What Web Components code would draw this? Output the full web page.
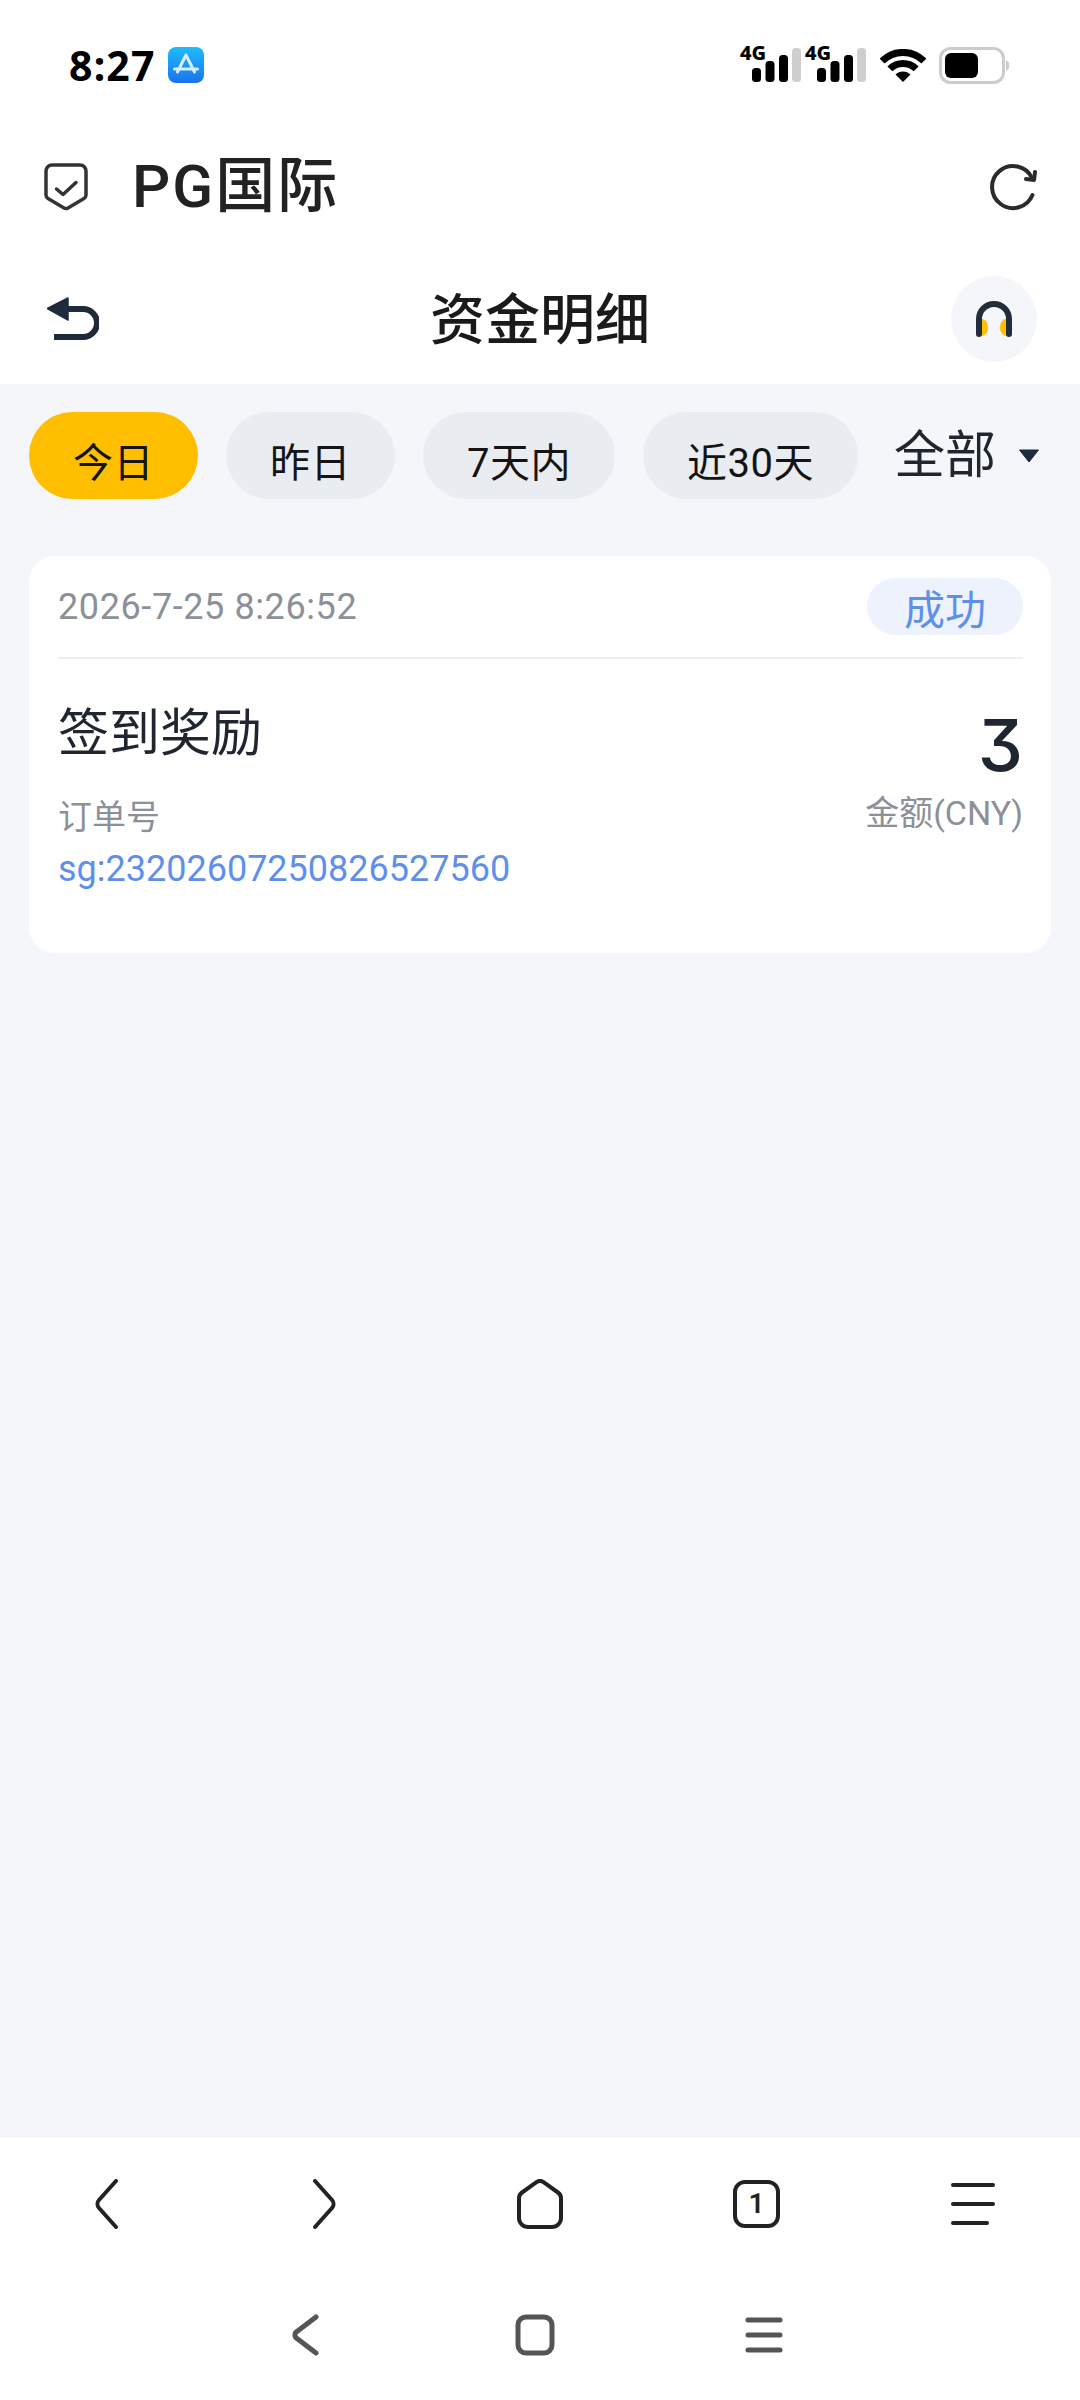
<!DOCTYPE html>
<html lang="zh-CN">
<head>
<meta charset="utf-8">
<title>资金明细</title>
<style>
	html, body {
		margin: 0;
		height: 100%;
	}

	body {
		width: 1080px;
		height: 2400px;
		display: flex;
		flex-direction: column;
		overflow: hidden;
		background: #f4f6fa;
		font-family: Roboto, 'Noto Sans CJK SC', sans-serif;
	}

	main {
		flex: 1;
		display: block;
	}
</style>
</head>
<body>
	<phone-status time="8:27"></phone-status>
	<app-bar>PG国际</app-bar>
	<title-bar>资金明细</title-bar>
	<main>
		<filter-row>
			<filter-tab active>今日</filter-tab>
			<filter-tab>昨日</filter-tab>
			<filter-tab>7天内</filter-tab>
			<filter-tab>近30天</filter-tab>
			<type-select slot="select">全部</type-select>
		</filter-row>
		<record-card
			date="2026-7-25 8:26:52"
			status="成功"
			name="签到奖励"
			order="sg:23202607250826527560"
			amount="3"
			unit="金额(CNY)"></record-card>
	</main>
	<browser-bar tabs="1"></browser-bar>
	<system-nav></system-nav>

<script>
	class PhoneStatus extends HTMLElement {
		constructor() {
			super();
			const signal = `
				<span class='signal'>
					<b>4G</b>
					<svg width='50' height='34' viewBox='0 0 50 34'>
						<rect x='1' y='20' width='9' height='14' rx='3.5'/>
						<rect x='14.500' y='13' width='9' height='21' rx='3.5'/>
						<rect x='28' y='7' width='9' height='27' rx='3.5'/>
						<rect x='41' y='0' width='9' height='34' rx='3.5' fill='#cfcfcf'/>
					</svg>
				</span>`;
			this.attachShadow({ mode: 'open' });
			this.shadowRoot.innerHTML = `
				<style>
					:host {
						display: flex;
						align-items: center;
						box-sizing: border-box;
						height: 120px;
						padding: 10px 69px 0 69px;
						background: #fff;
						color: #000;
					}

					.time {
						font: 700 41px/1 'Noto Sans', sans-serif;
						letter-spacing: 1.200px;
					}

					.store {
						margin-left: 12px;
					}

					.right {
						margin-left: auto;
						display: flex;
						align-items: center;
					}

					.signal {
						position: relative;
						display: block;
						width: 60px;
						height: 34px;
						margin-right: 5px;
					}

					.signal svg {
						position: absolute;
						right: 0;
						top: 0;
					}

					.signal b {
						position: absolute;
						left: -1px;
						top: -5px;
						font: 800 20px/20px 'Noto Sans', sans-serif;
					}

					.wifi {
						margin-left: 9px;
					}

					.battery {
						margin-left: 13px;
					}
				</style>
				<span class='time'>${this.getAttribute('time')}</span>
				<svg class='store' width='36' height='36' viewBox='0 0 36 36'>
					<defs>
						<linearGradient id='store' x1='0' y1='0' x2='0' y2='1'>
							<stop offset='0' stop-color='#1fbcfa'/>
							<stop offset='1' stop-color='#1a72f0'/>
						</linearGradient>
					</defs>
					<rect width='36' height='36' rx='8' fill='url(#store)'/>
					<path d='M18 8 L9.500 25 M18 8 L26.500 25 M6.500 22 H29.500' stroke='#d8eefe' stroke-width='3' stroke-linecap='round' fill='none'/>
				</svg>
				<span class='right'>
					${signal}
					${signal}
					<svg class='wifi' width='46' height='33' viewBox='0 0 46 33'>
						<g fill='none' stroke='#000' stroke-width='7'>
							<path d='M2.100 12.100 A29.500 29.500 0 0 1 43.900 12.100'/>
							<path d='M9.900 19.900 A18.500 18.500 0 0 1 36.100 19.900'/>
						</g>
						<path d='M23 33 L15.500 25.500 A10.600 10.600 0 0 1 30.500 25.500 Z'/>
					</svg>
					<svg class='battery' width='72' height='37' viewBox='0 0 72 37'>
						<rect x='1.500' y='1.500' width='63' height='34' rx='10' fill='none' stroke='#cccccc' stroke-width='3'/>
						<rect x='6' y='6' width='33' height='25' rx='6'/>
						<path d='M67 13 L70 15.500 V21.500 L67 24 Z' fill='#cccccc'/>
					</svg>
				</span>
			`;
		}
	}

	class AppBar extends HTMLElement {
		constructor() {
			super();
			this.attachShadow({ mode: 'open' });
			this.shadowRoot.innerHTML = `
				<style>
					:host {
						display: flex;
						align-items: center;
						box-sizing: border-box;
						height: 134px;
						padding: 0 44px;
						background: #fff;
						color: #222;
					}

					.name {
						margin-left: 44px;
						font-size: 60px;
						font-weight: 500;
						letter-spacing: 2px;
						line-height: 1;
					}

					.reload {
						margin-left: auto;
						margin-right: -1px;
					}
				</style>
				<svg width='44' height='48' viewBox='0 0 44 48' fill='none' stroke='#333' stroke-width='3.500' stroke-linecap='round' stroke-linejoin='round'>
					<path d='M8 2 H36 A6 6 0 0 1 42 8 V32 A4 4 0 0 1 40 35.500 L24 45 A4 4 0 0 1 20 45 L4 35.500 A4 4 0 0 1 2 32 V8 A6 6 0 0 1 8 2 Z'/>
					<path d='M12.500 26 L19 31.500 L32 19.500'/>
				</svg>
				<span class='name'><slot></slot></span>
				<svg class='reload' width='48' height='48' viewBox='0 0 48 48' fill='none' stroke='#2b2b2b' stroke-width='4' stroke-linecap='round' stroke-linejoin='round'>
					<path d='M43.500 32 A21 21 0 1 1 43 15'/>
					<path d='M46 9 L45 17 L37 16'/>
				</svg>
			`;
		}
	}

	class TitleBar extends HTMLElement {
		constructor() {
			super();
			this.attachShadow({ mode: 'open' });
			this.shadowRoot.innerHTML = `
				<style>
					:host {
						display: grid;
						grid-template-columns: 1fr auto 1fr;
						align-items: center;
						box-sizing: border-box;
						height: 130px;
						padding: 0 43px;
						background: #fff;
						color: #1a1a1a;
					}

					svg.back {
						margin-left: 4px;
					}

					.title {
						padding-top: 3px;
						font-size: 55px;
						font-weight: 500;
						line-height: 1;
					}

					.service {
						justify-self: end;
						width: 86px;
						height: 86px;
						border-radius: 50%;
						background: #f4f6fa;
						display: flex;
						align-items: center;
						justify-content: center;
					}
				</style>
				<svg class='back' width='52' height='44' viewBox='0 0 52 44'>
					<path d='M0 11.500 L21 1 V23 Z' fill='#1f2a3a' stroke='#1f2a3a' stroke-width='1.500' stroke-linejoin='round'/>
					<path d='M17 12 H36 A14 14 0 0 1 36 40 H7' fill='none' stroke='#1f2a3a' stroke-width='6'/>
				</svg>
				<span class='title'><slot></slot></span>
				<span class='service'>
					<svg width='36' height='36' viewBox='0 0 36 36'>
						<path d='M3 18 H6 A6 8.500 0 0 1 6 35 H3 Z' fill='#ffbe00'/>
						<path d='M33 18 H30 A6 8.500 0 0 0 30 35 H33 Z' fill='#ffbe00'/>
						<path d='M3 33 V18 A15 15 0 0 1 33 18 V33' fill='none' stroke='#222c3a' stroke-width='6' stroke-linecap='round'/>
					</svg>
				</span>
			`;
		}
	}

	class FilterRow extends HTMLElement {
		constructor() {
			super();
			this.attachShadow({ mode: 'open' });
			this.shadowRoot.innerHTML = `
				<style>
					:host {
						display: flex;
						align-items: center;
						gap: 28px;
						padding: 28px 0 0 29px;
					}
				</style>
				<slot></slot>
				<slot name='select'></slot>
			`;
		}
	}

	class FilterTab extends HTMLElement {
		constructor() {
			super();
			this.attachShadow({ mode: 'open' });
			this.shadowRoot.innerHTML = `
				<style>
					:host {
						display: block;
						box-sizing: border-box;
						height: 87px;
						padding: 16px 44px 0;
						border-radius: 44px;
						background: #e9ecf1;
						color: #141414;
						font-size: 40px;
						letter-spacing: 0.500px;
						line-height: 72px;
						white-space: nowrap;
					}

					:host([active]) {
						background: #ffbe00;
					}
				</style>
				<slot></slot>
			`;
		}
	}

	class TypeSelect extends HTMLElement {
		constructor() {
			super();
			this.attachShadow({ mode: 'open' });
			this.shadowRoot.innerHTML = `
				<style>
					:host {
						display: flex;
						align-items: center;
						margin-left: 8px;
						color: #1f2630;
						font-size: 51px;
						line-height: 87px;
						white-space: nowrap;
					}

					svg {
						margin-left: 22px;
					}
				</style>
				<slot></slot>
				<svg width='22' height='14' viewBox='0 0 22 14'>
					<path d='M1.500 1 H20.500 L11 13 Z' fill='#1f2a3a' stroke='#1f2a3a' stroke-linejoin='round'/>
				</svg>
			`;
		}
	}

	class RecordCard extends HTMLElement {
		constructor() {
			super();
			const attr = (name) => this.getAttribute(name);
			this.attachShadow({ mode: 'open' });
			this.shadowRoot.innerHTML = `
				<style>
					:host {
						display: block;
						box-sizing: border-box;
						margin: 57px 29px 0;
						padding: 22px 28px 60px 29px;
						background: #fff;
						border-radius: 26px;
					}

					.head {
						display: flex;
						align-items: center;
						justify-content: space-between;
						padding-bottom: 22px;
						border-bottom: 2px solid #eeeff1;
					}

					.date {
						color: #8c9099;
						font-size: 36px;
						letter-spacing: 0.600px;
						line-height: 48px;
					}

					.status {
						box-sizing: border-box;
						width: 156px;
						height: 57px;
						border-radius: 29px;
						background: #edf2fd;
						color: #5f8fec;
						font-size: 41px;
						line-height: 66px;
						text-align: center;
					}

					.body {
						display: flex;
						justify-content: space-between;
						padding-top: 43px;
					}

					.name {
						color: #1f2630;
						font-size: 51px;
						line-height: 64px;
					}

					.label {
						margin-top: 27px;
						color: #8c9099;
						font-size: 34px;
						line-height: 48px;
					}

					.order {
						margin-top: 4px;
						color: #5f8fec;
						font-size: 36px;
						line-height: 48px;
					}

					.right {
						display: flex;
						flex-direction: column;
						align-items: flex-end;
					}

					.amount {
						margin-top: 7px;
						color: #1f2630;
						font-family: Inter, Roboto, sans-serif;
						font-feature-settings: 'cv09';
						font-size: 72px;
						font-weight: 500;
						line-height: 72px;
					}

					.unit {
						margin-top: 8px;
						color: #8c9099;
						font-size: 34px;
						line-height: 48px;
					}
				</style>
				<div class='head'>
					<span class='date'>${attr('date')}</span>
					<span class='status'>${attr('status')}</span>
				</div>
				<div class='body'>
					<div>
						<div class='name'>${attr('name')}</div>
						<div class='label'>订单号</div>
						<div class='order'>${attr('order')}</div>
					</div>
					<div class='right'>
						<span class='amount'>${attr('amount')}</span>
						<span class='unit'>${attr('unit')}</span>
					</div>
				</div>
			`;
		}
	}

	class BrowserBar extends HTMLElement {
		constructor() {
			super();
			this.attachShadow({ mode: 'open' });
			this.shadowRoot.innerHTML = `
				<style>
					:host {
						display: grid;
						grid-template-columns: repeat(5, 216.400px);
						justify-content: center;
						align-items: center;
						height: 132px;
						background: #fff;
					}

					span {
						display: flex;
						justify-content: center;
						position: relative;
					}

					svg {
						fill: none;
						stroke: #222;
						stroke-width: 4;
						stroke-linecap: round;
						stroke-linejoin: round;
					}

					b {
						position: absolute;
						inset: 0;
						color: #222;
						font-size: 28px;
						font-weight: 600;
						line-height: 48px;
						text-align: center;
					}
				</style>
				<span><svg width='24' height='50' viewBox='0 0 24 50'><path d='M21 2 L4 21 A6 6 0 0 0 4 29 L21 48'/></svg></span>
				<span><svg width='24' height='50' viewBox='0 0 24 50'><path d='M3 2 L20 21 A6 6 0 0 1 20 29 L3 48'/></svg></span>
				<span><svg width='46' height='50' viewBox='0 0 46 50'><path d='M5 13.500 L19.500 3.200 A6 6 0 0 1 26.500 3.200 L41 13.500 A7 7 0 0 1 44 19 V39 A9 9 0 0 1 35 48 H11 A9 9 0 0 1 2 39 V19 A7 7 0 0 1 5 13.500 Z'/></svg></span>
				<span><svg width='47' height='48' viewBox='0 0 47 48'><rect x='2' y='2' width='43' height='44' rx='10'/></svg><b>${this.getAttribute('tabs')}</b></span>
				<span><svg width='44' height='44' viewBox='0 0 44 44'><path d='M2 3 H42 M2 22 H42 M2 41 H36'/></svg></span>
			`;
		}
	}

	class SystemNav extends HTMLElement {
		constructor() {
			super();
			this.attachShadow({ mode: 'open' });
			this.shadowRoot.innerHTML = `
				<style>
					:host {
						display: grid;
						grid-template-columns: repeat(3, 229px);
						justify-content: center;
						justify-items: center;
						align-items: center;
						box-sizing: border-box;
						height: 130px;
						padding-right: 10px;
						background: #fff;
					}

					svg {
						fill: none;
						stroke: #555;
						stroke-width: 5;
						stroke-linecap: round;
						stroke-linejoin: round;
					}
				</style>
				<svg width='28' height='42' viewBox='0 0 28 42'><path d='M24 3 L5 17.500 A4 4 0 0 0 5 24.500 L24 39'/></svg>
				<svg width='40' height='42' viewBox='0 0 40 42'><rect x='3' y='3' width='34' height='36' rx='8'/></svg>
				<svg width='38' height='36' viewBox='0 0 38 36'><path d='M3 3 H35 M3 18 H35 M3 33 H35'/></svg>
			`;
		}
	}

	customElements.define('phone-status', PhoneStatus);
	customElements.define('app-bar', AppBar);
	customElements.define('title-bar', TitleBar);
	customElements.define('filter-row', FilterRow);
	customElements.define('filter-tab', FilterTab);
	customElements.define('type-select', TypeSelect);
	customElements.define('record-card', RecordCard);
	customElements.define('browser-bar', BrowserBar);
	customElements.define('system-nav', SystemNav);
</script>
</body>
</html>
